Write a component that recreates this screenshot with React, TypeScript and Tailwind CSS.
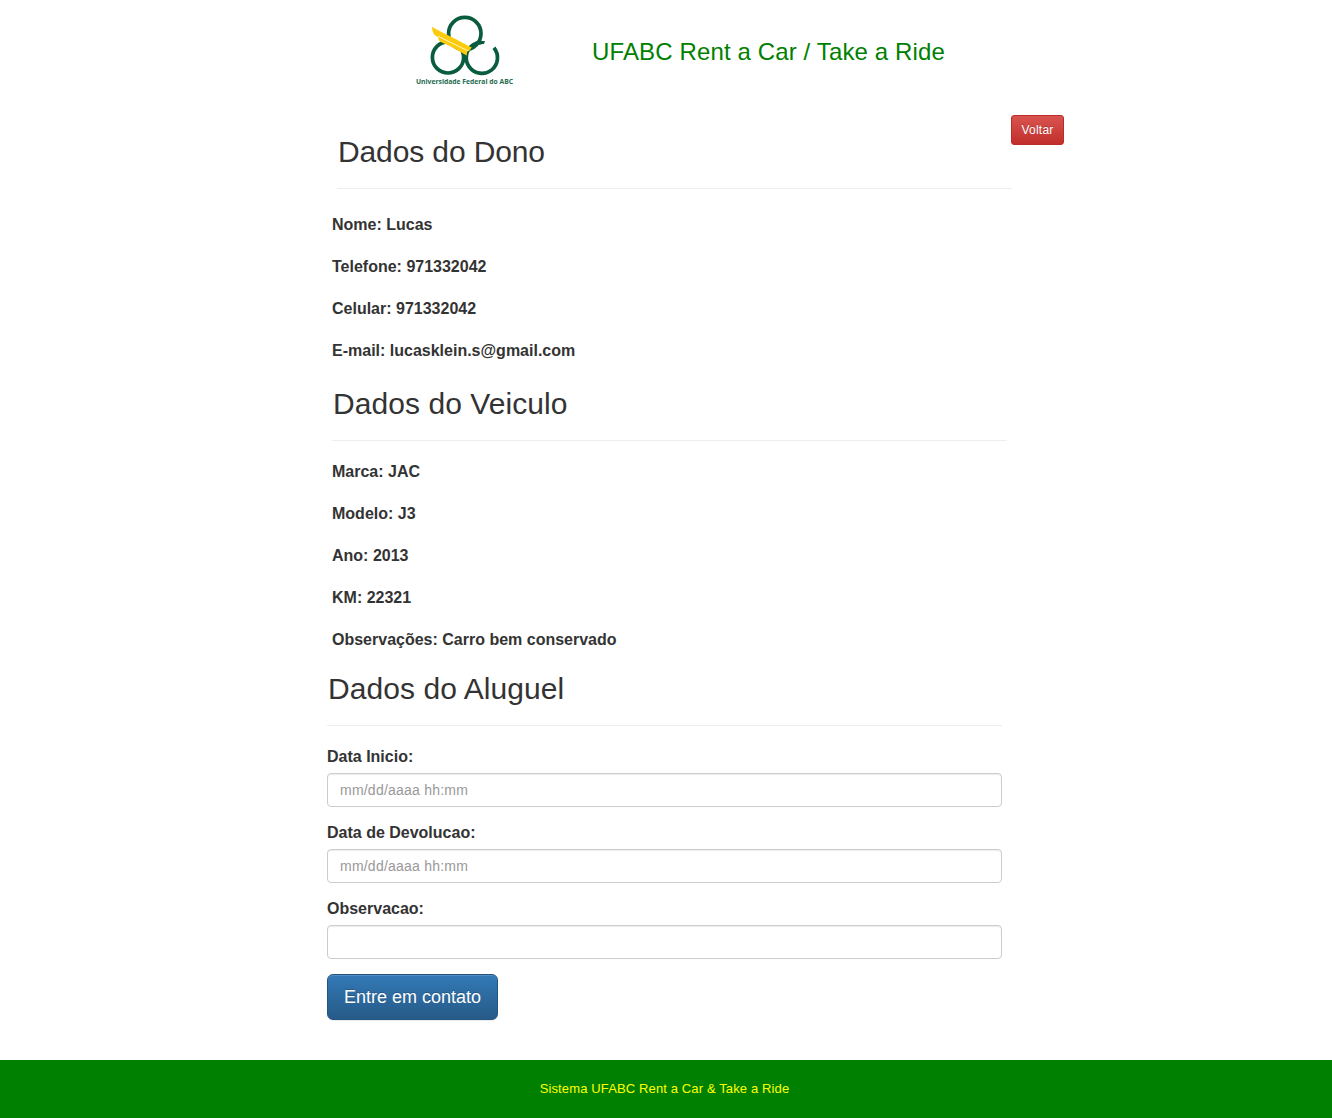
import React from "react";

function Logo() {
  return (
    <svg width="120" height="90" viewBox="0 0 120 90" className="ml-[405px] mt-[5px] shrink-0" aria-label="UFABC">
      <g fill="none" stroke="#0a5c3e" strokeWidth="3.7">
        <circle cx="59.8" cy="28.6" r="16.2" />
        <circle cx="43" cy="52.4" r="15.6" />
        <path d="M88.9 42.8 A15.6 15.6 0 1 1 68.2 39.8 Q72 37.4 76 37.7" />
      </g>
      <path d="M73 35.9 Q77 35.4 80.2 36.2 L78.8 39 L74 39.5 Z" fill="#0a5c3e" />
      <path d="M27.2 21.5 C30 24 34 25.4 66.7 42.4 L64.2 46 L62.3 46.2 L61.6 50.6 C52 45 44 40.5 37.5 37.8 C34.5 36.6 33.3 35 33.2 32.2 C29.5 30.5 26.7 27.5 27.2 21.5 Z" fill="#fccb0b" />
      <path d="M33 31.2 L62.8 45.8" fill="none" stroke="#fff" strokeWidth="0.8" />
      <text x="11" y="79.3" textLength="97" lengthAdjust="spacingAndGlyphs" fontFamily="Open Sans, sans-serif" fontSize="7" fontWeight="700" fill="#246b50">
        Universidade Federal do ABC
      </text>
    </svg>
  );
}

function Heading({ children }: { children: React.ReactNode }) {
  return (
    <h2 className="h-[55px] w-[675px] border-b border-[#eeeeee] pt-px pl-px text-[30px] leading-[33px] whitespace-nowrap">
      {children}
    </h2>
  );
}

function Rows({ items }: { items: string[] }) {
  return (
    <div className="flex flex-col gap-5 text-base leading-[22px] font-bold">
      {items.map((item) => (
        <p key={item}>{item}</p>
      ))}
    </div>
  );
}

function Field({ label, placeholder }: { label: string; placeholder?: string }) {
  return (
    <label className="block h-[76px]">
      <span className="block h-[27px] text-base leading-[22px] font-bold">{label}</span>
      <input
        placeholder={placeholder}
        className="block h-[34px] w-[675px] rounded border border-[#cccccc] bg-white px-3 text-sm tracking-[0.22px] shadow-[inset_0_1px_1px_rgba(0,0,0,0.075)] outline-none placeholder:text-[#999999]"
      />
    </label>
  );
}

export default function App() {
  return (
    <div className="flex h-[1118px] w-[1332px] flex-col overflow-hidden bg-white font-['Liberation_Sans',Arial,sans-serif] text-[#333333]">
      <header className="flex h-[115px] items-start">
        <Logo />
        <h1 className="mt-[38px] ml-[67px] text-[24px] leading-[28px] tracking-[0.13px] whitespace-nowrap text-[#008000]">UFABC Rent a Car / Take a Ride</h1>
      </header>

      <main className="h-[945px]">
        <div className="ml-[337px] flex h-[99px] items-start">
          <div className="w-[674px] pt-[19px]">
            <Heading>
              <span className="tracking-[-0.12px]">Dados do Dono</span>
            </Heading>
          </div>
          <button className="h-[30px] w-[53px] rounded-[3px] border border-[#b92c28] bg-linear-to-b from-[#d9534f] to-[#c12e2a] text-xs tracking-[0.25px] text-white [text-shadow:0_-1px_0_rgba(0,0,0,0.2)]">
            Voltar
          </button>
        </div>
        <section className="ml-[332px] h-[172px]">
          <Rows items={["Nome: Lucas", "Telefone: 971332042", "Celular: 971332042", "E-mail: lucasklein.s@gmail.com"]} />
        </section>
        <section className="ml-[332px] h-[285px]">
          <Heading>
            <span className="tracking-[0.06px]">Dados do Veiculo</span>
          </Heading>
          <div className="pt-5">
            <Rows items={["Marca: JAC", "Modelo: J3", "Ano: 2013", "KM: 22321", "Observações: Carro bem conservado"]} />
          </div>
        </section>
        <section className="ml-[327px]">
          <Heading>
            <span className="tracking-[0.06px]">Dados do Aluguel</span>
          </Heading>
          <div className="pt-5">
            <Field label="Data Inicio:" placeholder="mm/dd/aaaa hh:mm" />
            <Field label="Data de Devolucao:" placeholder="mm/dd/aaaa hh:mm" />
            <Field label="Observacao:" />
          </div>
          <button className="h-[46px] w-[171px] rounded-md border border-[#245580] bg-linear-to-b from-[#337ab7] to-[#265a88] text-lg whitespace-nowrap text-white shadow-[inset_0_1px_0_rgba(255,255,255,0.15),0_1px_1px_rgba(0,0,0,0.075)] [text-shadow:0_-1px_0_rgba(0,0,0,0.2)]">
            Entre em contato
          </button>
        </section>
      </main>

      <footer className="flex h-[58px] justify-center bg-[#008000] pt-[19px] pr-[3px] text-[13px] leading-5 tracking-[0.13px] text-[#ffff00]">
        Sistema UFABC Rent a Car &amp; Take a Ride
      </footer>
    </div>
  );
}
